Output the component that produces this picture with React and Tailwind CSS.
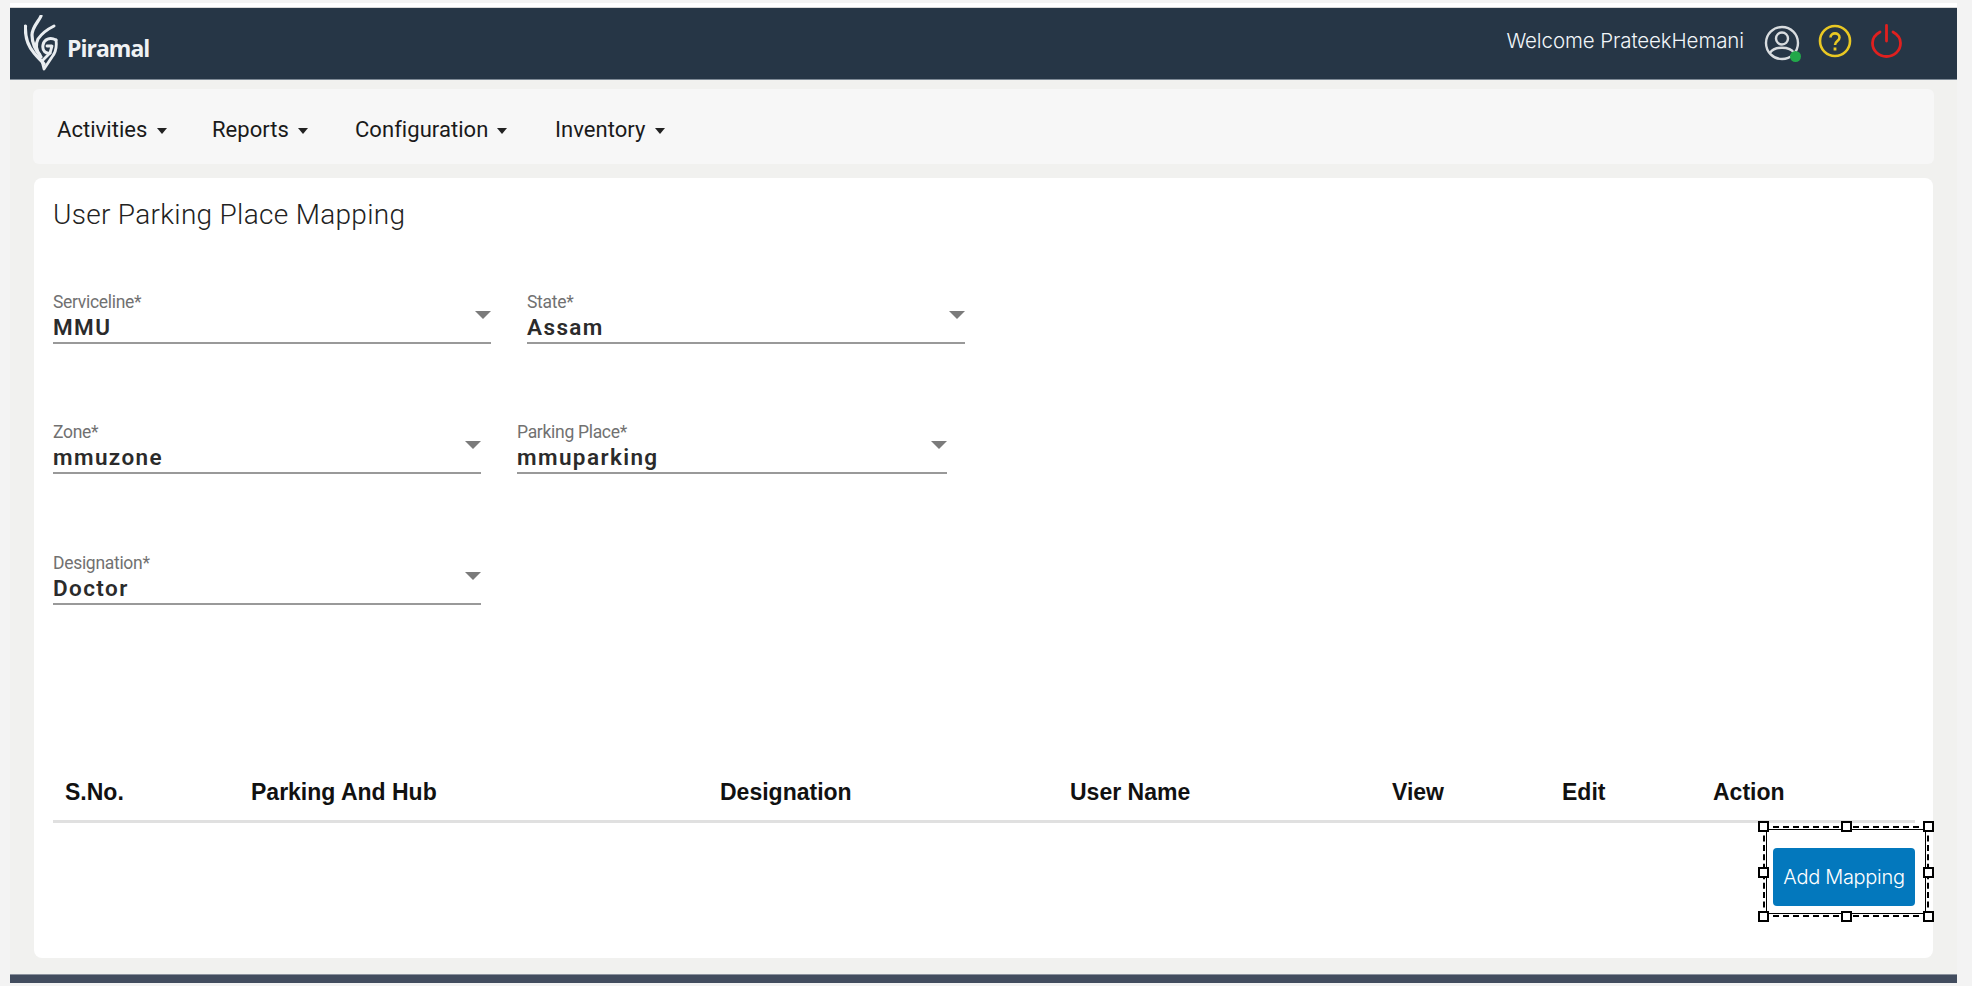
import React from "react";

const Caret = () => (
  <span className="ml-[9px] inline-block align-middle w-0 h-0 border-x-[5.5px] border-x-transparent border-t-[6px] border-t-[#222]" />
);

const Field = ({ label, value, w }) => (
  <div className={`relative h-[55px] border-b-2 border-b-[#999] ${w}`}>
    <div className="text-[17.5px] leading-[20px] text-[#717171] tracking-[-0.3px] pt-[3px] h-[23px]">{label}</div>
    <div className="text-[22.5px] leading-[30px] font-semibold text-[#2b2b2b] tracking-[1.4px]">{value}</div>
    <span className="absolute top-[22px] right-0 w-0 h-0 border-x-[8px] border-x-transparent border-t-[8px] border-t-[#7b7b7b]" />
  </div>
);

const Handle = ({ className }) => (
  <span className={`absolute w-[11px] h-[11px] bg-white border-2 border-black ${className}`} />
);

const Logo = () => (
  <svg width="34" height="56" viewBox="0 0 34 56" fill="none" className="shrink-0">
    <g stroke="#e9edf0" strokeLinecap="round" strokeLinejoin="round">
      <path d="M1.5 11C1 20 3 30 10 38C14 43 18 46 20 49" strokeWidth="3.2" />
      <path d="M17 1C15 6 8 12 8 20C8 28 12 36 17 42" strokeWidth="3.2" />
      <path d="M30 11C24 14 18 18 14 24C11 30 13 36 16 40" strokeWidth="3" />
      <path d="M32 25C26 22 20 24 19 30C18 36 22 39 26 38" strokeWidth="3" />
      <path d="M32 25C33 32 32 37 28 42L20 54L18 46L26 38L28 31H23" strokeWidth="2.8" />
    </g>
  </svg>
);

const Cols = [
  ["S.No.", "w-[186px]"],
  ["Parking And Hub", "w-[469px]"],
  ["Designation", "w-[350px]"],
  ["User Name", "w-[322px]"],
  ["View", "w-[170px]"],
  ["Edit", "w-[151px]"],
  ["Action", "w-[100px]"],
];

export default function App() {
  return (
    <div className="w-[1972px] h-[986px] overflow-hidden bg-[#f3f3f3] pl-[10px] pr-[15px] pt-[3px] font-['Roboto',sans-serif]">
      <div className="h-[5px] bg-white border-b border-b-[#d8d8d8]" />
      <div className="h-[975px] bg-[#f1f1ef] flex flex-col">
        <header className="h-[72px] bg-[#263646] flex items-center pl-[14px] pr-[54px] border-b border-b-[#7e8a96]">
          <Logo />
          <span className="ml-[9px] mt-[9px] text-[23px] font-bold text-[#f0f2f4] font-['Open_Sans',sans-serif] tracking-[-1px]">Piramal</span>
          <span className="ml-auto mb-[5px] text-[20.5px] text-[#f2f6fa] font-['Inter',sans-serif] font-light tracking-[-0.1px]">Welcome PrateekHemani</span>
          <span className="relative ml-[20px] w-[36px] h-[36px]">
            <svg width="36" height="36" viewBox="0 0 36 36" fill="none" stroke="#d8dcdf" strokeWidth="2.4">
              <circle cx="18" cy="18" r="16" />
              <circle cx="18" cy="13.5" r="6" />
              <path d="M6 28C10 21 26 21 30 28" />
            </svg>
            <span className="absolute right-[-1px] bottom-[-1px] w-[11px] h-[11px] rounded-full bg-[#22a84a]" />
          </span>
          <svg className="ml-[18px] mb-[5px]" width="34" height="34" viewBox="0 0 34 34" fill="none" stroke="#e9c823" strokeWidth="2.6">
            <circle cx="17" cy="17" r="15" />
            <path d="M12.5 13.5C12.5 8 21.5 8 21.5 13.5C21.5 17 17 17 17 21" strokeWidth="2.6" />
            <path d="M17 23.5V26.5" strokeWidth="2.8" />
          </svg>
          <svg className="ml-[19px] mb-[5px]" width="32" height="34" viewBox="0 0 32 34" fill="none" stroke="#e0201f" strokeWidth="2.8" strokeLinecap="round">
            <path d="M9 8C3.5 11 1.5 15 1.5 19C1.5 27 8 32.5 15.5 32.5C23 32.5 29.5 27 29.5 19C29.5 15 27.5 11 22 8" />
            <path d="M15.5 1.5V17" />
          </svg>
        </header>

        <nav className="mt-[9px] mx-[23px] h-[75px] bg-[#f7f7f7] rounded-[6px] flex items-center pl-[24px] pt-[6px] text-[22px] text-[#1a1a1a] tracking-[0.05px]">
          <span className="w-[155px]">Activities<Caret /></span>
          <span className="w-[143px]">Reports<Caret /></span>
          <span className="w-[200px]">Configuration<Caret /></span>
          <span>Inventory<Caret /></span>
        </nav>

        <main className="relative mt-[14px] mx-[24px] h-[782px] bg-white rounded-[8px] px-[19px] pt-[19px]">
          <h1 className="text-[28px] leading-[36px] font-light text-[#222] tracking-[0.3px]">User Parking Place Mapping</h1>
          <div className="flex gap-[36px] mt-[56px]">
            <Field label="Serviceline*" value="MMU" w="w-[438px]" />
            <Field label="State*" value="Assam" w="w-[438px]" />
          </div>
          <div className="flex gap-[36px] mt-[75px]">
            <Field label="Zone*" value="mmuzone" w="w-[428px]" />
            <Field label="Parking Place*" value="mmuparking" w="w-[430px]" />
          </div>
          <div className="flex mt-[76px]">
            <Field label="Designation*" value="Doctor" w="w-[428px]" />
          </div>
          <div className="mt-[170px] h-[48px] w-[1862px] border-b-[3px] border-b-[#e0e0e0] flex pl-[12px] text-[23px] font-bold text-[#111] font-['Liberation_Sans',sans-serif] leading-[34px]">
            {Cols.map(([t, w]) => (
              <span key={t} className={w}>{t}</span>
            ))}
          </div>
          <div className="flex justify-end -mr-[1px] pt-[25px]">
            <button className="w-[142px] h-[58px] bg-[#0378bd] rounded-[4px] text-white text-[20px] font-['Inter',sans-serif] font-light tracking-[-0.3px]">Add Mapping</button>
          </div>
          <div className="absolute left-[1729px] top-[648px] w-[166px] h-[91px] border-2 border-dashed border-black">
            <div className="absolute inset-[1px] border-[1.5px] border-black" />
            <Handle className="left-[-7px] top-[-7px]" />
            <Handle className="left-[76px] top-[-7px]" />
            <Handle className="right-[-7px] top-[-7px]" />
            <Handle className="left-[-7px] top-[39px]" />
            <Handle className="right-[-7px] top-[39px]" />
            <Handle className="left-[-7px] bottom-[-7px]" />
            <Handle className="left-[76px] bottom-[-7px]" />
            <Handle className="right-[-7px] bottom-[-7px]" />
          </div>
        </main>

        <footer className="mt-[16px] h-[9px] bg-[#424c5e] border-t border-t-[#8b929d]" />
      </div>
    </div>
  );
}
